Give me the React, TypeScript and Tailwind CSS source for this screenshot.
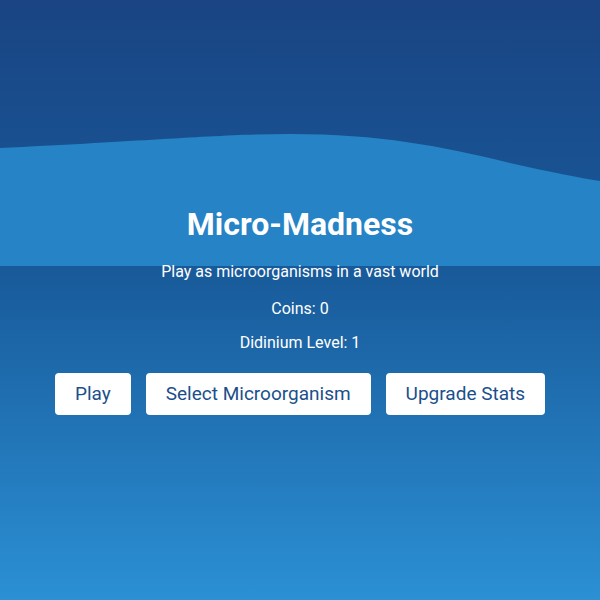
import { useState } from 'react';

const Wave = () => (
  <svg
    className="absolute left-0 top-0 w-full h-[266px]"
    viewBox="0 0 600 266"
    preserveAspectRatio="none"
    aria-hidden="true"
  >
    <path
      d="M0,148 C150,141 220,134 290,134 C380,134 440,146 510,163 C550,172 580,178 600,181 L600,266 L0,266 Z"
      fill="#2583c6"
    />
  </svg>
);

const MenuButton = ({ label, onClick }: { label: string; onClick?: () => void }) => (
  <button
    onClick={onClick}
    className="h-[42px] px-5 bg-white rounded-[4px] text-[19px] text-[#1b4f8c] hover:bg-blue-50 transition-colors"
  >
    {label}
  </button>
);

const App = () => {
  const [coins] = useState(0);
  const [level] = useState(1);

  return (
    <div
      className="relative min-h-screen overflow-hidden bg-[linear-gradient(to_bottom,#1a4483_0%,#185a9a_45%,#2b90d4_100%)] text-white"
      style={{ fontFamily: 'Roboto, "Liberation Sans", sans-serif' }}
    >
      <Wave />

      <div className="relative z-10 flex flex-col items-center pt-[205px] text-center">
        <h1 className="text-[32px] leading-[38px] font-bold">Micro-Madness</h1>
        <p className="mt-[17px] text-[16px] leading-6">Play as microorganisms in a vast world</p>
        <p className="mt-[13px] text-[16px] leading-6">Coins: {coins}</p>
        <p className="mt-[10px] text-[16px] leading-6">Didinium Level: {level}</p>

        <div className="mt-[18px] flex gap-[15px]">
          <MenuButton label="Play" />
          <MenuButton label="Select Microorganism" />
          <MenuButton label="Upgrade Stats" />
        </div>
      </div>
    </div>
  );
};

export default App;
